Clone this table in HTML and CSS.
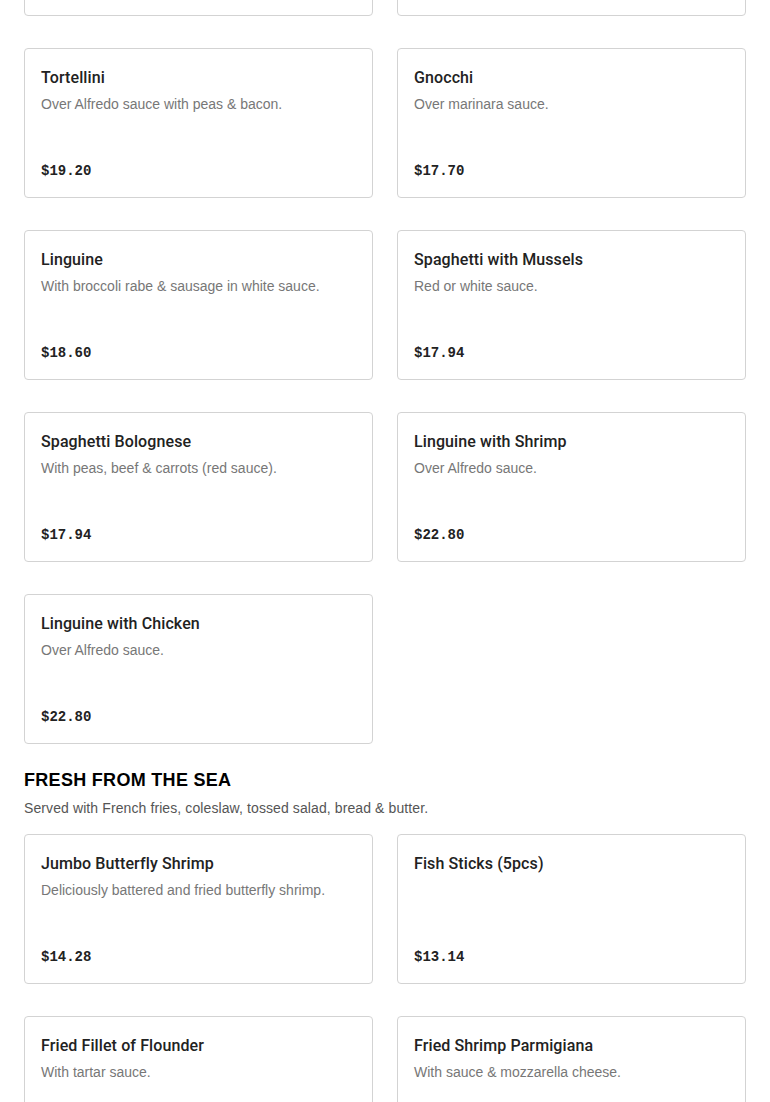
FILE: index.html
```html
<!DOCTYPE html>
<html lang="en">
<head>
<meta charset="utf-8">
<title>Menu</title>
<link rel="stylesheet" href="styles.css">
</head>
<body>
<main class="page">
  <section class="section section-pasta">
    <div class="grid">
      <div class="card"><div class="title">Baked Ziti</div><div class="desc">With ricotta &amp; mozzarella.</div><div class="price">$17.94</div></div>
      <div class="card"><div class="title">Ravioli</div><div class="desc">Cheese ravioli in marinara sauce.</div><div class="price">$17.70</div></div>
      <div class="card"><div class="title">Tortellini</div><div class="desc">Over Alfredo sauce with peas &amp; bacon.</div><div class="price">$19.20</div></div>
      <div class="card"><div class="title">Gnocchi</div><div class="desc">Over marinara sauce.</div><div class="price">$17.70</div></div>
      <div class="card"><div class="title">Linguine</div><div class="desc">With broccoli rabe &amp; sausage in white sauce.</div><div class="price">$18.60</div></div>
      <div class="card"><div class="title">Spaghetti with Mussels</div><div class="desc">Red or white sauce.</div><div class="price">$17.94</div></div>
      <div class="card"><div class="title">Spaghetti Bolognese</div><div class="desc">With peas, beef &amp; carrots (red sauce).</div><div class="price">$17.94</div></div>
      <div class="card"><div class="title">Linguine with Shrimp</div><div class="desc">Over Alfredo sauce.</div><div class="price">$22.80</div></div>
      <div class="card"><div class="title">Linguine with Chicken</div><div class="desc">Over Alfredo sauce.</div><div class="price">$22.80</div></div>
    </div>
  </section>
  <section class="section">
    <h2 class="section-title">FRESH FROM THE SEA</h2>
    <p class="section-sub">Served with French fries, coleslaw, tossed salad, bread &amp; butter.</p>
    <div class="grid">
      <div class="card"><div class="title">Jumbo Butterfly Shrimp</div><div class="desc">Deliciously battered and fried butterfly shrimp.</div><div class="price">$14.28</div></div>
      <div class="card"><div class="title">Fish Sticks (5pcs)</div><div class="price">$13.14</div></div>
      <div class="card"><div class="title">Fried Fillet of Flounder</div><div class="desc">With tartar sauce.</div><div class="price">$15.54</div></div>
      <div class="card"><div class="title">Fried Shrimp Parmigiana</div><div class="desc">With sauce &amp; mozzarella cheese.</div><div class="price">$18.60</div></div>
    </div>
  </section>
</main>
</body>
</html>
```

FILE: styles.css
```css
* { box-sizing: border-box; }
html, body { margin: 0; padding: 0; background: #fff; }
body {
  font-family: "Liberation Sans", Arial, sans-serif;
  color: #222;
  overflow: hidden;
}
.page {
  padding: 0 24px;
  margin-top: -134px;
}
.grid {
  display: grid;
  grid-template-columns: 1fr 1fr;
  column-gap: 24px;
  row-gap: 32px;
}
.card {
  border: 1px solid #d3d3d3;
  border-radius: 4px;
  min-height: 150px;
  padding: 17px 16px 16px;
  display: flex;
  flex-direction: column;
}
.title {
  font-family: Roboto, "Liberation Sans", Arial, sans-serif;
  font-size: 16px;
  line-height: 24px;
  font-weight: 500;
  color: #222;
  letter-spacing: 0.1px;
}
.desc {
  margin-top: 4px;
  font-size: 14px;
  line-height: 20px;
  color: #777;
}
.price {
  margin-top: auto;
  font-family: "Liberation Mono", "Courier New", monospace;
  font-weight: 700;
  font-size: 14px;
  line-height: 20px;
  color: #222;
}
.section-title {
  margin: 24px 0 0;
  font-size: 18px;
  line-height: 24px;
  font-weight: 900;
  color: #000;
  letter-spacing: 0.3px;
}
.section-sub {
  margin: 6px 0 16px;
  font-size: 14px;
  line-height: 20px;
  color: #555;
  letter-spacing: 0.1px;
}
```
